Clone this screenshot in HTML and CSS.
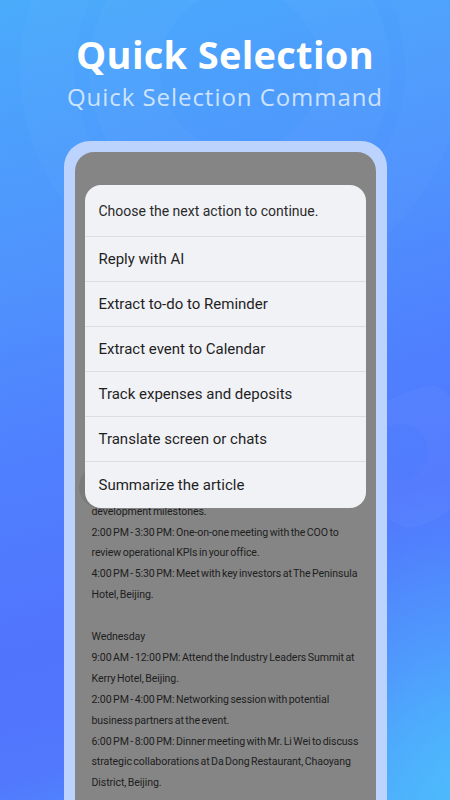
FILE: index.html
```html
<!DOCTYPE html>
<html lang="en">
<head>
<meta charset="utf-8">
<title>Quick Selection</title>
<link rel="stylesheet" href="styles.css">
</head>
<body>
<div class="page">
  <div class="deco deco-ring"></div>
  <div class="deco deco-blob"></div>
  <header class="hero">
    <h1 class="hero-title">Quick Selection</h1>
    <p class="hero-sub">Quick Selection Command</p>
  </header>
  <div class="phone">
    <div class="screen">
      <div class="doc">
        <div class="ln">Tuesday</div>
        <div class="ln">9:00 AM - 10:00 AM: Review quarterly reports with the</div>
        <div class="ln">finance team in the main conference room.</div>
        <div class="ln">10:30 AM - 12:00 PM: Strategy meeting with department</div>
        <div class="ln">heads to discuss upcoming initiatives.</div>
        <div class="ln">12:00 PM - 1:00 PM: Lunch with the marketing director.</div>
        <div class="ln">1:00 PM - 2:00 PM: Call with the product team about</div>
        <div class="ln">new features and roadmap updates.</div>
        <div class="ln">Follow up on design reviews, testing plans and</div>
        <div class="ln">resource allocation for the next sprint.</div>
        <div class="ln">Review client feedback and prepare a summary of</div>
        <div class="ln">open issues for the leadership team.</div>
        <div class="ln">Confirm the schedule for the product launch and</div>
        <div class="ln">key partner demos, and update the project</div>
        <div class="ln">timeline with the latest</div>
        <div class="ln">development milestones.</div>
        <div class="ln">2:00 PM - 3:30 PM: One-on-one meeting with the COO to</div>
        <div class="ln">review operational KPIs in your office.</div>
        <div class="ln">4:00 PM - 5:30 PM: Meet with key investors at The Peninsula</div>
        <div class="ln">Hotel, Beijing.</div>
        <div class="ln">&nbsp;</div>
        <div class="ln">Wednesday</div>
        <div class="ln">9:00 AM - 12:00 PM: Attend the Industry Leaders Summit at</div>
        <div class="ln">Kerry Hotel, Beijing.</div>
        <div class="ln">2:00 PM - 4:00 PM: Networking session with potential</div>
        <div class="ln">business partners at the event.</div>
        <div class="ln">6:00 PM - 8:00 PM: Dinner meeting with Mr. Li Wei to discuss</div>
        <div class="ln">strategic collaborations at Da Dong Restaurant, Chaoyang</div>
        <div class="ln">District, Beijing.</div>
      </div>
      <div class="fab"></div>
      <div class="sheet">
        <div class="sheet-head">Choose the next action to continue.</div>
        <div class="sheet-item">Reply with AI</div>
        <div class="sheet-item">Extract to-do to Reminder</div>
        <div class="sheet-item">Extract event to Calendar</div>
        <div class="sheet-item">Track expenses and deposits</div>
        <div class="sheet-item">Translate screen or chats</div>
        <div class="sheet-item">Summarize the article</div>
      </div>
    </div>
  </div>
</div>
</body>
</html>
```

FILE: styles.css
```css
* { box-sizing: border-box; }
html, body { margin: 0; padding: 0; }
body {
  width: 450px;
  height: 800px;
  overflow: hidden;
  font-family: Roboto, "Noto Sans", "Liberation Sans", sans-serif;
}
.page {
  position: relative;
  width: 450px;
  height: 800px;
  overflow: hidden;
  display: flex;
  flex-direction: column;
  align-items: center;
  background:
    radial-gradient(ellipse 260px 320px at 470px 800px, #4dbcfc 0%, rgba(77,188,252,0) 100%),
    linear-gradient(165deg, #4aabfb 0%, #4f93fd 30%, #4f80fe 50%, #5174fd 72%, #5178fd 85%, #4f9dfc 100%);
}
.deco { position: absolute; pointer-events: none; }
.deco-ring {
  left: 20px; top: -150px;
  width: 440px; height: 440px;
  border-radius: 50%;
  background: radial-gradient(circle at 50% 50%, rgba(255,255,255,0) 0 80px, rgba(255,255,255,0.025) 81px 150px, rgba(255,255,255,0) 151px 165px, rgba(255,255,255,0.02) 166px 220px, rgba(255,255,255,0) 221px);
}
.deco-blob {
  left: 350px; top: 385px;
  width: 200px; height: 150px;
  border-radius: 50%;
  background: radial-gradient(circle at 25% 45%, rgba(80,130,254,0.35) 0 28px, rgba(255,255,255,0.03) 29px 75px, rgba(255,255,255,0) 76px);
}
.hero {
  position: relative;
  padding-top: 28px;
  display: flex;
  flex-direction: column;
  align-items: center;
  color: #fff;
}
.hero-title {
  margin: 0;
  font-family: "Open Sans", "Noto Sans", sans-serif;
  font-weight: 700;
  font-size: 38px;
  line-height: 52px;
  letter-spacing: 0.3px;
}
.hero-sub {
  margin: 2px 0 0;
  font-family: "Open Sans", "Noto Sans", sans-serif;
  font-weight: 400;
  font-size: 24px;
  line-height: 30px;
  color: rgba(255,255,255,0.72);
  letter-spacing: 0.95px;
}
.phone {
  position: relative;
  margin-top: 29px;
  width: 323px;
  flex: 1;
  padding: 11px 11px 0;
  border-radius: 26px 26px 0 0;
  background: #bcd3fe;
}
.screen {
  position: relative;
  height: 100%;
  border-radius: 19px 19px 0 0;
  background: #858585;
  overflow: hidden;
}
.doc {
  padding: 36px 10px 0 17px;
  font-size: 10.6px;
  line-height: 20.9px;
  letter-spacing: -0.1px;
  word-spacing: -1px;
  color: #1e1e1e;
}
.ln { white-space: nowrap; }
.fab {
  position: absolute;
  left: 4px; top: 313px;
  width: 44px; height: 44px;
  border-radius: 50%;
  background: #7b7b7b;
}
.sheet {
  position: absolute;
  left: 10px; right: 10px; top: 33px;
  background: #f1f2f6;
  border-radius: 16px;
  overflow: hidden;
}
.sheet-head {
  height: 52px;
  padding-left: 14px;
  display: flex;
  align-items: center;
  font-size: 14px;
  color: #2a2a2a;
  border-bottom: 1px solid #dcdde2;
}
.sheet-item {
  height: 45px;
  padding-left: 14px;
  display: flex;
  align-items: center;
  font-size: 15px;
  color: #1f1f1f;
  border-bottom: 1px solid #dcdde2;
}
.sheet-item:last-child { border-bottom: 0; height: 46px; }
```
